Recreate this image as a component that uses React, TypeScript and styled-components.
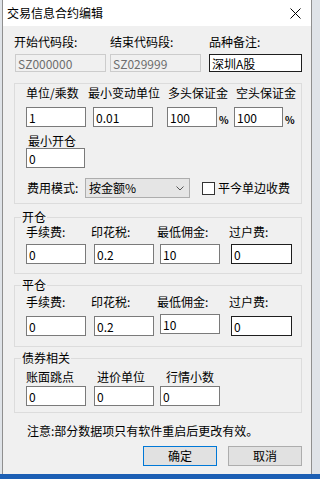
import React from 'react';
import styled, { createGlobalStyle } from 'styled-components';

const GlobalStyle = createGlobalStyle`
  html, body {
    margin: 0;
    padding: 0;
  }
  body {
    background: #dfe3e8;
    font-family: "Noto Sans CJK SC", "Noto Sans", sans-serif;
    font-size: 12px;
    color: #000;
  }
`;

const Desktop = styled.div`
  height: 479px;
  display: flex;
  flex-direction: column;
  overflow: hidden;
`;

const Window = styled.div`
  margin-left: 2px;
  width: 310px;
  box-sizing: border-box;
  border-left: 1px solid #8f8f8f;
  border-right: 1px solid #8f8f8f;
  background: #f0f0f0;
  display: flex;
  flex-direction: column;
`;

const TitleBar = styled.div`
  height: 26px;
  background: #fff;
  display: flex;
  align-items: center;
  justify-content: space-between;
  padding: 0 10px 0 4px;
  line-height: 14px;
`;

const Body = styled.div`
  padding: 9px 9px 8px 11px;
  display: flex;
  flex-direction: column;
`;

const Taskbar = styled.div`
  flex: 1;
  background: #1c5fb4;
`;

const TopGrid = styled.div`
  display: grid;
  grid-template-columns: 96px 99px 1fr;
  row-gap: 5px;
`;

const Label = styled.div<{ $ml?: number }>`
  line-height: 14px;
  height: 14px;
  white-space: nowrap;
  margin-left: ${(p) => p.$ml ?? 0}px;
`;

const TextBox = styled.input<{ $w: number; $h?: number; $ml?: number; $dark?: boolean; $mt?: number }>`
  box-sizing: border-box;
  width: ${(p) => p.$w}px;
  height: ${(p) => p.$h ?? 20}px;
  margin: ${(p) => p.$mt ?? 0}px 0 0 ${(p) => p.$ml ?? 0}px;
  padding: 0 2px;
  border: 1px solid ${(p) => (p.$dark ? '#1e1e1e' : '#7a7a7a')};
  background: #fff;
  font-family: "Noto Sans CJK SC", "Noto Sans", sans-serif;
  font-size: 12px;
  color: #000;
  outline: none;

  &:disabled {
    background: #f0f0f0;
    border-color: #cccccc;
    color: #6d6d6d;
  }
`;

const Group = styled.div<{ $mt: number; $pt: number; $pb: number; $pl: number }>`
  position: relative;
  margin-top: ${(p) => p.$mt}px;
  border: 1px solid #dcdcdc;
  padding: ${(p) => p.$pt}px 0 ${(p) => p.$pb}px ${(p) => p.$pl}px;
`;

const Legend = styled.div`
  position: absolute;
  top: -8px;
  left: 6px;
  padding: 0 1px;
  background: #f0f0f0;
  line-height: 14px;
`;

const FieldGrid = styled.div<{ $cols: string; $gap: number }>`
  display: grid;
  grid-template-columns: ${(p) => p.$cols};
  row-gap: ${(p) => p.$gap}px;
  align-items: start;
`;

const PercentCell = styled.div`
  display: flex;
  align-items: flex-end;
  gap: 2px;
`;

const Percent = styled.span`
  font-size: 10px;
  line-height: 14px;
  font-weight: bold;
`;

const Stack = styled.div<{ $mt: number }>`
  display: flex;
  flex-direction: column;
  align-items: flex-start;
  margin-top: ${(p) => p.$mt}px;
`;

const FeeRow = styled.div`
  display: flex;
  align-items: center;
  margin-top: 10px;
`;

const FeeLabel = styled.span`
  width: 58px;
  margin-left: 1px;
  line-height: 14px;
`;

const Combo = styled.div`
  box-sizing: border-box;
  width: 105px;
  height: 20px;
  border: 1px solid #adadad;
  background: #e5e5e5;
  display: flex;
  align-items: center;
  justify-content: space-between;
  padding: 0 5px 0 3px;
  line-height: 14px;
`;

const CheckBox = styled.span`
  box-sizing: border-box;
  width: 13px;
  height: 13px;
  margin-left: 12px;
  border: 1px solid #333;
  background: #fff;
`;

const CheckLabel = styled.span`
  margin-left: 3px;
  line-height: 14px;
`;

const Note = styled.div`
  margin: 11px 0 0 13px;
  line-height: 14px;
`;

const ButtonRow = styled.div`
  display: flex;
  justify-content: flex-end;
  gap: 11px;
  margin-top: 8px;
`;

const Button = styled.button<{ $primary?: boolean }>`
  box-sizing: border-box;
  width: 74px;
  height: 20px;
  padding: 0;
  border: 1px solid ${(p) => (p.$primary ? '#0078d7' : '#adadad')};
  background: #e1e1e1;
  font-family: "Noto Sans CJK SC", "Noto Sans", sans-serif;
  font-size: 12px;
  line-height: 14px;
  color: #000;
`;

const feeCols = '65px 66px 72px 1fr';

interface FeeGroupProps {
  title: string;
  mt: number;
  pt: number;
  pb: number;
  gap: number;
  raiseMin?: boolean;
}

const FeeGroup: React.FC<FeeGroupProps> = ({ title, mt, pt, pb, gap, raiseMin }) => (
  <Group $mt={mt} $pt={pt} $pb={pb} $pl={11}>
    <Legend>{title}</Legend>
    <FieldGrid $cols={feeCols} $gap={gap}>
      <Label>手续费:</Label>
      <Label>印花税:</Label>
      <Label>最低佣金:</Label>
      <Label>过户费:</Label>
      <TextBox $w={60} defaultValue="0" />
      <TextBox $w={60} $ml={3} defaultValue="0.2" />
      <TextBox $w={60} $ml={3} $mt={raiseMin ? -2 : 0} defaultValue="10" />
      <TextBox $w={61} $ml={2} $dark defaultValue="0" />
    </FieldGrid>
  </Group>
);

const CloseIcon = () => (
  <svg width="11" height="11" viewBox="0 0 11 11">
    <path d="M0.5 0.5 L10.5 10.5 M10.5 0.5 L0.5 10.5" stroke="#000" strokeWidth="1" />
  </svg>
);

const Chevron = () => (
  <svg width="8" height="5" viewBox="0 0 8 5">
    <path d="M0.5 0.5 L4 4 L7.5 0.5" stroke="#555" strokeWidth="1" fill="none" />
  </svg>
);

export default function App() {
  return (
    <Desktop>
      <GlobalStyle />
      <Window>
        <TitleBar>
          <span>交易信息合约编辑</span>
          <CloseIcon />
        </TitleBar>
        <Body>
          <TopGrid>
            <Label>开始代码段:</Label>
            <Label>结束代码段:</Label>
            <Label>品种备注:</Label>
            <TextBox $w={91} $h={18} $ml={1} disabled defaultValue="SZ000000" />
            <TextBox $w={91} $h={18} disabled defaultValue="SZ029999" />
            <TextBox $w={93} $h={18} $dark defaultValue="深圳A股" />
          </TopGrid>

          <Group $mt={11} $pt={2} $pb={5} $pl={11}>
            <FieldGrid $cols="62px 79px 67px 1fr" $gap={7}>
              <Label>单位/乘数</Label>
              <Label>最小变动单位</Label>
              <Label $ml={1}>多头保证金</Label>
              <Label $ml={2}>空头保证金</Label>
              <TextBox $w={60} defaultValue="1" />
              <TextBox $w={60} $ml={5} defaultValue="0.01" />
              <PercentCell>
                <TextBox $w={50} defaultValue="100" />
                <Percent>%</Percent>
              </PercentCell>
              <PercentCell>
                <TextBox $w={49} defaultValue="100" />
                <Percent>%</Percent>
              </PercentCell>
            </FieldGrid>
            <Stack $mt={7}>
              <Label $ml={2}>最小开仓</Label>
              <TextBox $w={59} defaultValue="0" />
            </Stack>
            <FeeRow>
              <FeeLabel>费用模式:</FeeLabel>
              <Combo>
                <span>按金额%</span>
                <Chevron />
              </Combo>
              <CheckBox />
              <CheckLabel>平今单边收费</CheckLabel>
            </FeeRow>
          </Group>

          <FeeGroup title="开仓" mt={13} pt={7} pb={9} gap={5} />
          <FeeGroup title="平仓" mt={11} pt={9} pb={10} gap={7} raiseMin />

          <Group $mt={11} $pt={11} $pb={6} $pl={11}>
            <Legend>债券相关</Legend>
            <FieldGrid $cols={feeCols} $gap={2}>
              <Label>账面跳点</Label>
              <Label $ml={6}>进价单位</Label>
              <Label $ml={9}>行情小数</Label>
              <span />
              <TextBox $w={60} defaultValue="0" />
              <TextBox $w={60} $ml={3} defaultValue="0" />
              <TextBox $w={60} $ml={3} defaultValue="0" />
              <span />
            </FieldGrid>
          </Group>

          <Note>注意:部分数据项只有软件重启后更改有效。</Note>

          <ButtonRow>
            <Button $primary>确定</Button>
            <Button>取消</Button>
          </ButtonRow>
        </Body>
      </Window>
      <Taskbar />
    </Desktop>
  );
}
